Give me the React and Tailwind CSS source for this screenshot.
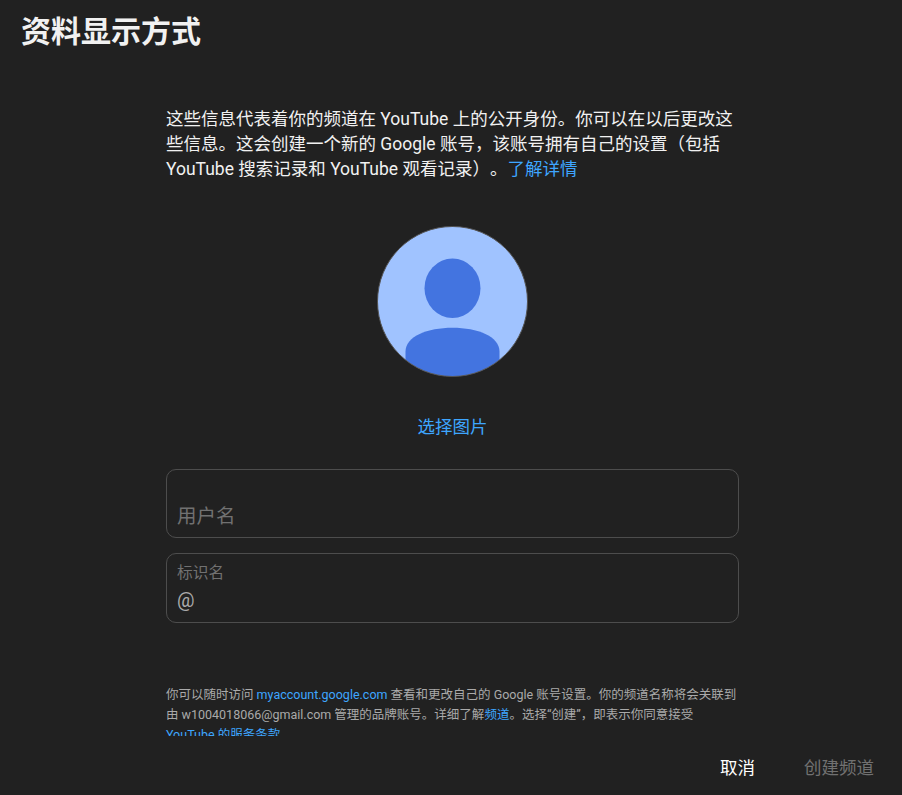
function Avatar() {
  return (
    <svg viewBox="-0.5 -0.5 151 151" className="block h-[151px] w-[151px]">
      <defs>
        <clipPath id="avatar-clip">
          <circle cx="75" cy="75" r="75" />
        </clipPath>
      </defs>
      <g clipPath="url(#avatar-clip)">
        <rect width="150" height="150" fill="#a0c3ff" />
        <ellipse cx="75" cy="61.7" rx="28" ry="29.8" fill="#4374e0" />
        <path
          d="M28 150V125C28 110 50 101.300 75 101.300C100 101.300 122 110 122 125V150Z"
          fill="#4374e0"
        />
      </g>
      <circle cx="75" cy="75" r="75" fill="none" stroke="#555555" strokeWidth="1" />
    </svg>
  );
}

function App() {
  return (
    <div className="flex h-[795px] w-[902px] flex-col overflow-hidden bg-[#212121] font-['Roboto','Noto_Sans_CJK_SC',sans-serif] text-[#f1f1f1] [text-spacing-trim:space-all]">
      <div className="flex min-h-0 flex-1 flex-col overflow-hidden">
        <h1 className="px-[21px] pt-[12px] text-[30px] leading-[40px] font-bold">资料显示方式</h1>

        <div className="mt-[55px] ml-[166px] flex w-[573px] flex-col">
          <p className="text-[17.5px] leading-[25px]">
            这些信息代表着你的频道在 YouTube 上的公开身份。你可以在以后更改这些信息。这会创建一个新的 Google
            账号，该账号拥有自己的设置（包括 YouTube 搜索记录和 YouTube 观看记录）。
            <a className="text-[#3ea6ff]">了解详情</a>
          </p>

          <div className="mt-[44px] flex justify-center">
            <Avatar />
          </div>

          <button className="mt-[36px] text-[17.5px] leading-[28px] text-[#3ea6ff]">选择图片</button>

          <div className="mt-[28px] flex h-[69px] items-end rounded-[10px] border border-[#4d4d4d] px-[10px] pb-[6px]">
            <input
              placeholder="用户名"
              className="w-full bg-transparent text-[19.500px] leading-[28px] outline-none placeholder:text-[#717171]"
            />
          </div>

          <div className="mt-[15px] flex h-[70px] flex-col rounded-[10px] border border-[#4d4d4d] px-[10px] pt-[8px]">
            <label className="text-[15.750px] leading-[22px] text-[#717171]">标识名</label>
            <div className="mt-[3px] text-[19.500px] leading-[28px] text-[#aaaaaa]">@</div>
          </div>

          <p className="mt-[62px] text-[12.500px] leading-[20px] text-[#aaaaaa]">
            你可以随时访问 <a className="text-[#3ea6ff]">myaccount.google.com</a> 查看和更改自己的 Google
            账号设置。你的频道名称将会关联到由 w1004018066@gmail.com 管理的品牌账号。详细了解
            <a className="text-[#3ea6ff]">频道</a>。选择“创建”，即表示你同意接受{" "}
            <a className="text-[#3ea6ff]">YouTube 的服务条款</a>
          </p>
        </div>
      </div>

      <div className="flex h-[59px] shrink-0 items-center justify-end gap-[49px] pt-[5px] pr-[28px] text-[17.5px] leading-[28px]">
        <button className="text-white">取消</button>
        <button disabled className="text-[#717171]">
          创建频道
        </button>
      </div>
    </div>
  );
}

export default App;
